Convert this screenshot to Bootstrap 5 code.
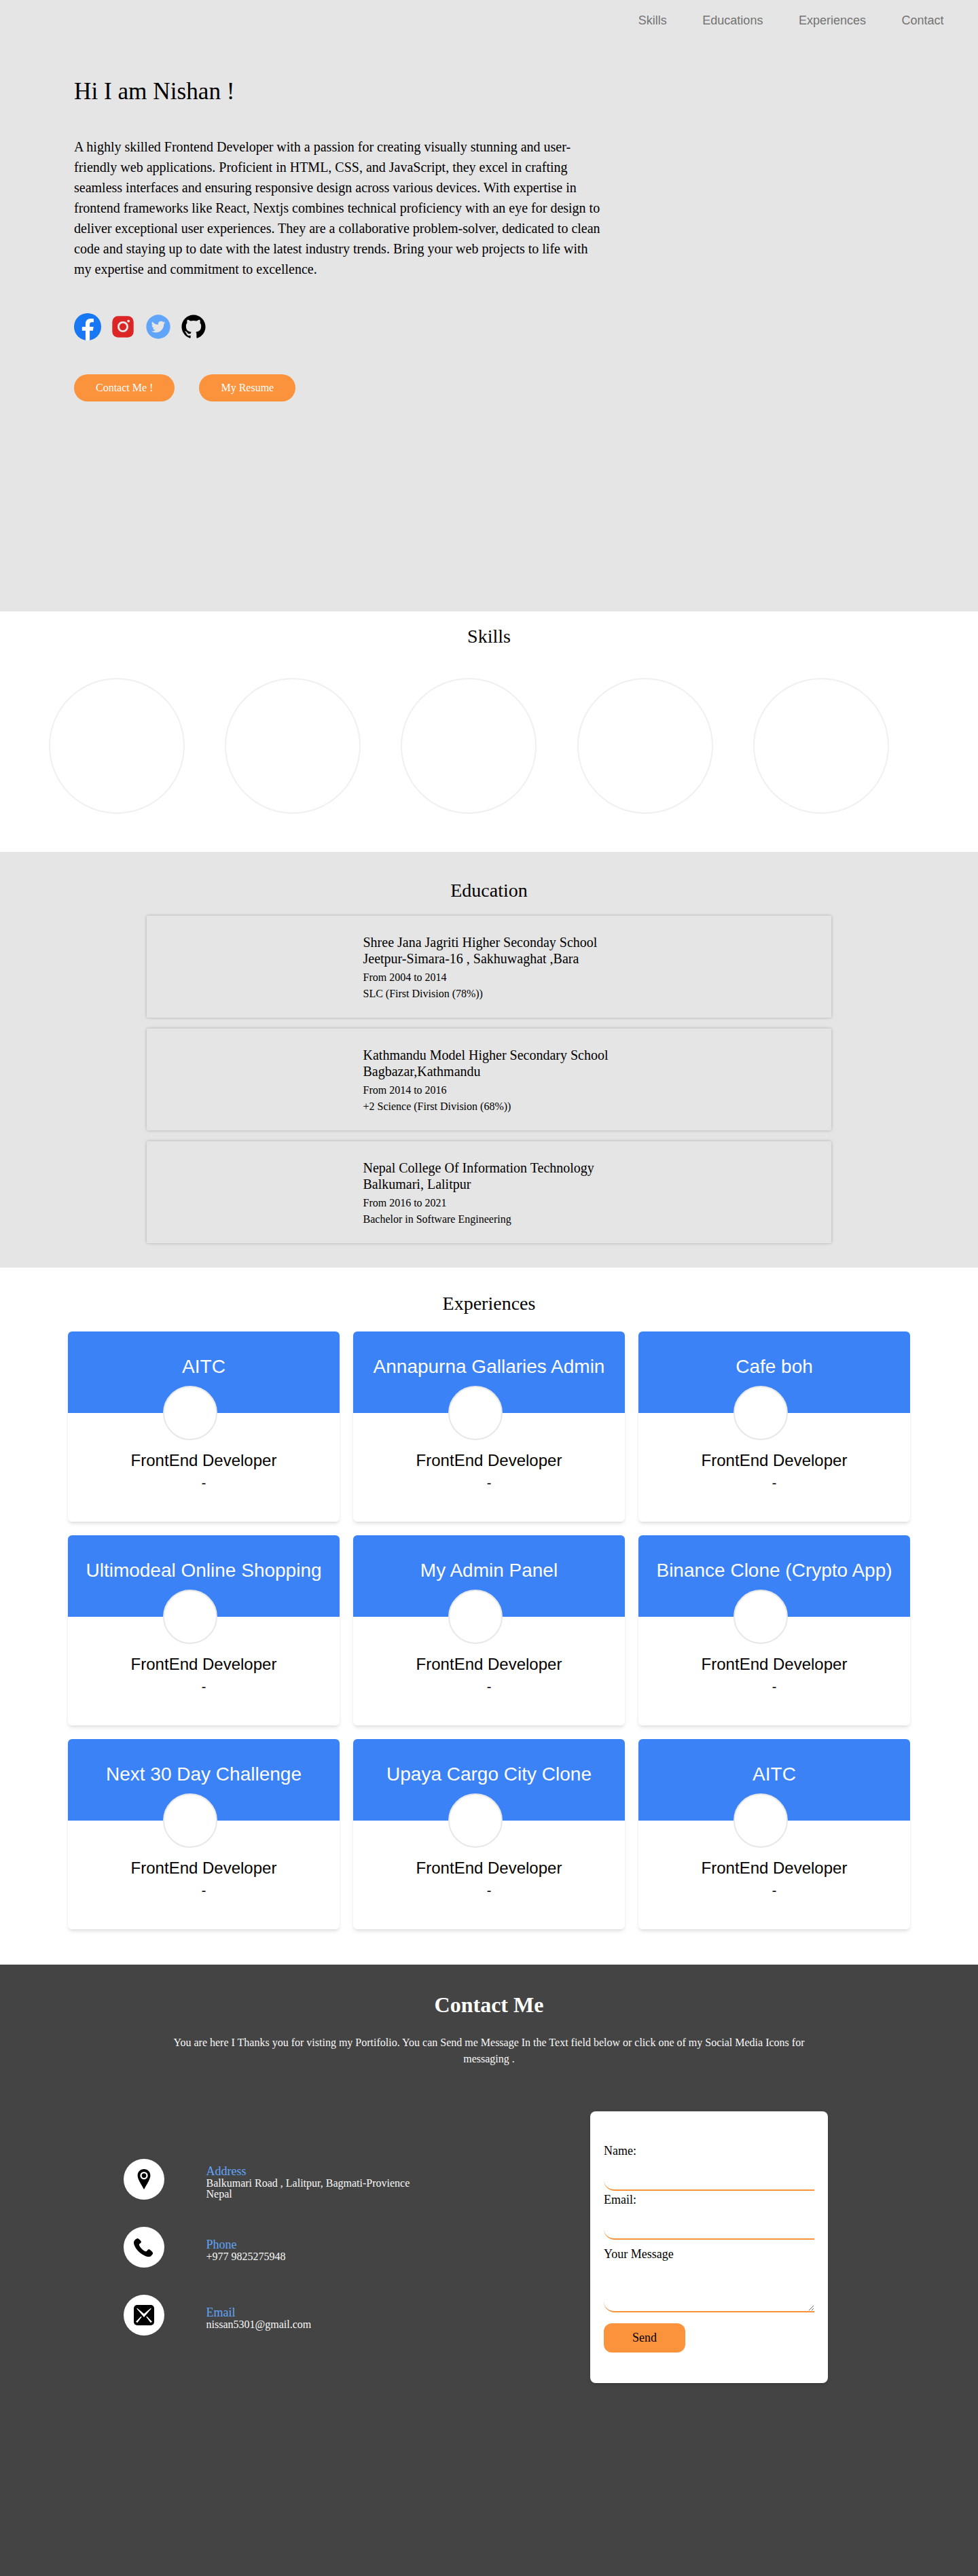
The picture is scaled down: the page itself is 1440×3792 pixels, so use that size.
<!DOCTYPE html>
<html lang="en">
<head>
<meta charset="utf-8">
<meta name="viewport" content="width=device-width, initial-scale=1">
<title>Nishan | Frontend Developer</title>
<link href="https://cdn.jsdelivr.net/npm/bootstrap@5.3.0/dist/css/bootstrap.min.css" rel="stylesheet">
<style>
body{font-family:"Liberation Serif",serif;color:#000;background:#fff;line-height:1.5}
.bg-soft{background:#e5e5e5}
.sans{font-family:"Liberation Sans",sans-serif}
/* hero */
.hero{height:900px}
.top-nav{padding:18px 50.5px 0;gap:52.5px;font-size:18px;line-height:24px}
.top-nav .nav-link{padding:0;color:#737373}
.intro{margin:73px 0 0 109px;width:790px}
.intro h1{font-size:35.2px;line-height:40px;font-weight:400;margin:0 0 46px}
.intro p{font-size:20px;line-height:30px;margin:0 0 50px;width:778px}
.socials{height:40px;margin-bottom:50px}
.ic-tw{margin-left:18px}
.ic-gh{margin-left:16px}
.btn-pill{height:40px;border-radius:20px;padding:0 32px;background:#fb923c;color:#fff;font-size:16px;line-height:40px;border:0}
.cta{gap:36px}
/* sections */
.sec-title{font-size:28px;line-height:40px;font-weight:400;margin:0;text-align:center}
.skills{height:354px;padding:17px 72px 0}
.track{margin-top:41px;overflow:hidden}
.slide-item{flex:0 0 20%}
.disc{width:200px;height:200px;border:2px solid #f0f0f0;border-radius:50%}
.education{height:612px;padding-top:37px}
.edu-list{width:1008px;margin:17px auto 0;gap:16px}
.edu-item{height:150px;border-radius:2px;box-shadow:0 0 4px rgba(0,0,0,.25);padding:27px 0 0 318.5px;background:#e5e5e5}
.edu-item h3{font-size:20px;line-height:24px;font-weight:400;margin:0 0 4px}
.edu-item p{font-size:16px;line-height:24px;margin:0}
.experiences{height:1026px;padding-top:33px}
.exp-grid{display:grid;grid-template-columns:repeat(3,400px);gap:20px;width:1240px;margin:21px 0 0 100px}
.exp-card{height:280px;border-radius:6px;overflow:hidden;box-shadow:0 4px 6px -1px rgba(0,0,0,.1),0 2px 4px -2px rgba(0,0,0,.1)}
.exp-head{height:120px;background:#3b82f6;color:#fff;font-size:28px;line-height:40px;padding-top:32px}
.avatar{left:140px;top:80px;width:80px;height:80px;border:2px solid #e5e7eb;border-radius:50%;background:#fff}
.role{font-size:24px;line-height:32px;margin:54px 0 5px}
.period{font-size:20px;line-height:24px;margin:0}
/* contact */
.contact{height:900px;background:#444;color:#f8f8f8;padding-top:39px}
.contact h2{font-size:32px;line-height:40px;font-weight:700;margin:0 0 24px;color:#fff}
.contact-lead{width:936px;margin:0 auto;font-size:16px;line-height:24px}
.contact-row{margin-top:65px;padding-left:182px}
.info{width:687px;padding-top:70px;gap:40px}
.info-line{height:60px;gap:61.5px}
.info-ic{width:60px;height:60px;border-radius:50%;background:#fff;flex:none}
.info-txt{font-size:16px;line-height:16px;padding-top:17px}
.info-txt.tall{padding-top:9px}
.info-txt b{display:block;font-weight:400;font-size:18px;line-height:18px;margin-bottom:1px;color:#60a5fa}
.msg-form{width:350px;height:400px;background:#fff;border-radius:8px;color:#000;padding:45px 20px 0;font-size:18px;box-shadow:0 4px 6px -1px rgba(0,0,0,.1),0 2px 4px -2px rgba(0,0,0,.1)}
.msg-form label{display:block;line-height:27px}
.line-input{display:block;width:100%;border:0;border-bottom:2px solid #fb923c;border-radius:0 0 0 16px;background:#fff;height:45px;padding:0 12px;outline:0}
.msg-form textarea.line-input{height:72px;margin-bottom:16px}
.btn-send{display:block;width:120px;height:43px;border:0;border-radius:12px;background:#fb923c;color:#000;font-size:18px;padding:0}
</style>
</head>
<body>
<header class="hero bg-soft">
  <nav class="nav top-nav sans justify-content-end">
    <a class="nav-link" href="#skills">Skills</a>
    <a class="nav-link" href="#educations">Educations</a>
    <a class="nav-link" href="#experiences">Experiences</a>
    <a class="nav-link" href="#contact">Contact</a>
  </nav>
  <div class="intro">
    <h1>Hi I am Nishan !</h1>
    <p>A highly skilled Frontend Developer with a passion for creating visually stunning and user-friendly web applications. Proficient in HTML, CSS, and JavaScript, they excel in crafting seamless interfaces and ensuring responsive design across various devices. With expertise in frontend frameworks like React, Nextjs combines technical proficiency with an eye for design to deliver exceptional user experiences. They are a collaborative problem-solver, dedicated to clean code and staying up to date with the latest industry trends. Bring your web projects to life with my expertise and commitment to excellence.</p>
    <div class="socials d-flex align-items-center">
      <svg width="40" height="40" viewBox="0 0 40 40"><circle cx="20" cy="20" r="20" fill="#1877f2"/><path fill="#fff" d="M27.8 25.8l.9-5.8h-5.6v-3.7c0-1.6.8-3.1 3.3-3.1H29V8.3s-2.3-.4-4.5-.4c-4.6 0-7.6 2.8-7.6 7.8V20h-5.1v5.8h5.1v14a20 20 0 0 0 6.2 0v-14z"/></svg>
      <svg class="ms-3" width="32" height="32" viewBox="0 0 32 32"><rect x=".3" y=".3" width="31.4" height="31.4" rx="8.5" fill="#dc2626"/><circle cx="16" cy="16" r="6.6" fill="none" stroke="#e5e5e5" stroke-width="2.9"/><circle cx="24.2" cy="7.6" r="1.9" fill="#e5e5e5"/></svg>
      <svg class="ic-tw" width="36" height="36" viewBox="0 0 20 20"><circle cx="10" cy="10" r="9.8" fill="#60a5fa"/><path fill="#e5e5e5" transform="translate(10 10) scale(1.24) translate(-10.2 -10.1)" d="M13.905 8.264c.004.082.005.164.005.244 0 2.5-1.901 5.381-5.379 5.381a5.335 5.335 0 0 1-2.898-.85c.147.018.298.025.451.025.886 0 1.701-.301 2.348-.809a1.895 1.895 0 0 1-1.766-1.312 1.9 1.9 0 0 0 .853-.033 1.892 1.892 0 0 1-1.517-1.854v-.023c.255.141.547.227.857.237a1.89 1.89 0 0 1-.585-2.526 5.376 5.376 0 0 0 3.897 1.977 1.891 1.891 0 0 1 3.222-1.725 3.797 3.797 0 0 0 1.2-.459 1.9 1.9 0 0 1-.831 1.047 3.799 3.799 0 0 0 1.086-.299 3.834 3.834 0 0 1-.943.979z"/></svg>
      <svg class="ic-gh" width="36" height="36" viewBox="0 0 16 16"><path fill="#000" d="M8 .2C3.700.2.2 3.700.2 8c0 3.450 2.240 6.360 5.340 7.390.39.07.53-.17.53-.38v-1.330c-2.170.47-2.630-1.050-2.630-1.050-.35-.9-.87-1.140-.87-1.140-.71-.48.05-.47.05-.47.78.05 1.200.8 1.200.8.7 1.200 1.830.85 2.270.65.07-.5.27-.85.5-1.040-1.730-.2-3.550-.87-3.550-3.860 0-.85.3-1.550.8-2.090-.08-.2-.35-.99.08-2.060 0 0 .65-.21 2.140.8a7.400 7.400 0 0 1 3.900 0c1.490-1.010 2.140-.8 2.140-.8.43 1.070.16 1.860.08 2.060.5.54.8 1.240.8 2.090 0 3-1.830 3.660-3.560 3.850.28.24.53.72.53 1.450v2.140c0 .21.14.45.53.38A7.800 7.800 0 0 0 15.800 8C15.800 3.700 12.300.2 8 .2z"/></svg>
    </div>
    <div class="cta d-flex">
      <a class="btn btn-pill" href="#contact">Contact Me !</a>
      <a class="btn btn-pill" href="#">My Resume</a>
    </div>
  </div>
</header>

<section id="skills" class="skills">
  <h2 class="sec-title">Skills</h2>
  <div class="track d-flex">
    <div class="slide-item"><div class="disc"></div></div>
    <div class="slide-item"><div class="disc"></div></div>
    <div class="slide-item"><div class="disc"></div></div>
    <div class="slide-item"><div class="disc"></div></div>
    <div class="slide-item"><div class="disc"></div></div>
  </div>
</section>

<section id="educations" class="education bg-soft">
  <h2 class="sec-title">Education</h2>
  <div class="edu-list d-flex flex-column">
    <article class="edu-item"><h3>Shree Jana Jagriti Higher Seconday School<br>Jeetpur-Simara-16 , Sakhuwaghat ,Bara</h3><p>From 2004 to 2014</p><p>SLC (First Division (78%))</p></article>
    <article class="edu-item"><h3>Kathmandu Model Higher Secondary School<br>Bagbazar,Kathmandu</h3><p>From 2014 to 2016</p><p>+2 Science (First Division (68%))</p></article>
    <article class="edu-item"><h3>Nepal College Of Information Technology<br>Balkumari, Lalitpur</h3><p>From 2016 to 2021</p><p>Bachelor in Software Engineering</p></article>
  </div>
</section>

<section id="experiences" class="experiences">
  <h2 class="sec-title">Experiences</h2>
  <div class="exp-grid sans text-center">
    <article class="exp-card position-relative"><div class="exp-head">AITC</div><div class="avatar position-absolute"></div><p class="role">FrontEnd Developer</p><p class="period">-</p></article>
    <article class="exp-card position-relative"><div class="exp-head">Annapurna Gallaries Admin</div><div class="avatar position-absolute"></div><p class="role">FrontEnd Developer</p><p class="period">-</p></article>
    <article class="exp-card position-relative"><div class="exp-head">Cafe boh</div><div class="avatar position-absolute"></div><p class="role">FrontEnd Developer</p><p class="period">-</p></article>
    <article class="exp-card position-relative"><div class="exp-head">Ultimodeal Online Shopping</div><div class="avatar position-absolute"></div><p class="role">FrontEnd Developer</p><p class="period">-</p></article>
    <article class="exp-card position-relative"><div class="exp-head">My Admin Panel</div><div class="avatar position-absolute"></div><p class="role">FrontEnd Developer</p><p class="period">-</p></article>
    <article class="exp-card position-relative"><div class="exp-head">Binance Clone (Crypto App)</div><div class="avatar position-absolute"></div><p class="role">FrontEnd Developer</p><p class="period">-</p></article>
    <article class="exp-card position-relative"><div class="exp-head">Next 30 Day Challenge</div><div class="avatar position-absolute"></div><p class="role">FrontEnd Developer</p><p class="period">-</p></article>
    <article class="exp-card position-relative"><div class="exp-head">Upaya Cargo City Clone</div><div class="avatar position-absolute"></div><p class="role">FrontEnd Developer</p><p class="period">-</p></article>
    <article class="exp-card position-relative"><div class="exp-head">AITC</div><div class="avatar position-absolute"></div><p class="role">FrontEnd Developer</p><p class="period">-</p></article>
  </div>
</section>

<section id="contact" class="contact">
  <h2 class="text-center">Contact Me</h2>
  <p class="contact-lead text-center">You are here I Thanks you for visting my Portifolio. You can Send me Message In the Text field below or click one of my Social Media Icons for messaging .</p>
  <div class="contact-row d-flex align-items-start">
    <div class="info d-flex flex-column">
      <div class="info-line d-flex">
        <span class="info-ic d-flex align-items-center justify-content-center"><svg width="30" height="30" viewBox="0 0 30 30"><path d="M15 0C9.600 0 5.600 4 5.600 9.300c0 3 1.200 5.600 2.700 8.700 2 4 4.300 7.600 6.700 12 2.400-4.400 4.700-8 6.700-12 1.500-3.100 2.700-5.700 2.700-8.700C24.400 4 20.400 0 15 0z"/><circle cx="15" cy="9.600" r="4.500" stroke="#fff" stroke-width="2.300"/></svg></span>
        <div class="info-txt tall"><b>Address</b>Balkumari Road , Lalitpur, Bagmati-Provience<br>Nepal</div>
      </div>
      <div class="info-line d-flex">
        <span class="info-ic d-flex align-items-center justify-content-center"><svg width="30" height="30" viewBox="0 0 30 30"><path d="M5.500 2C3.500 2.300 0 5 0 8.200c0 3.600 3 9.300 7.600 13.600 4.500 4.200 11 7.900 15.600 7.200 2.400-.4 4.700-3.500 5-5.500.1-.9-4.500-5.300-5.900-5.500-1.700-.2-2.600 3.200-4.300 3.200-1.500 0-4-1.600-6.200-3.700-2.100-2.100-4-4.700-4-6.200 0-1.800 3.500-2.600 3.200-4.300C10.800 5.600 6.500 1.800 5.500 2z"/></svg></span>
        <div class="info-txt"><b>Phone</b>+977 9825275948</div>
      </div>
      <div class="info-line d-flex">
        <span class="info-ic d-flex align-items-center justify-content-center"><svg width="30" height="30" viewBox="0 0 30 30"><rect width="30" height="30" rx="5"/><path fill="#fff" d="M4.300 5.500l.8-.8L15 13l9.900-8.300.8.800L16.300 16.600 15 18.300l-1.300-1.700zM10.700 16.800l1 1-6.600 8.400-2-1.700zM19.300 16.800l-1 1 6.600 8.400 2-1.700z"/></svg></span>
        <div class="info-txt"><b>Email</b>nissan5301@gmail.com</div>
      </div>
    </div>
    <form class="msg-form">
      <label for="f-name">Name:</label><input id="f-name" class="line-input" type="text">
      <label for="f-mail">Email:</label><input id="f-mail" class="line-input" type="email">
      <label class="pt-2" for="f-msg">Your Message</label><textarea id="f-msg" class="line-input"></textarea>
      <button type="button" class="btn-send">Send</button>
    </form>
  </div>
</section>
<script src="https://cdn.jsdelivr.net/npm/bootstrap@5.3.0/dist/js/bootstrap.bundle.min.js"></script>
</body>
</html>
